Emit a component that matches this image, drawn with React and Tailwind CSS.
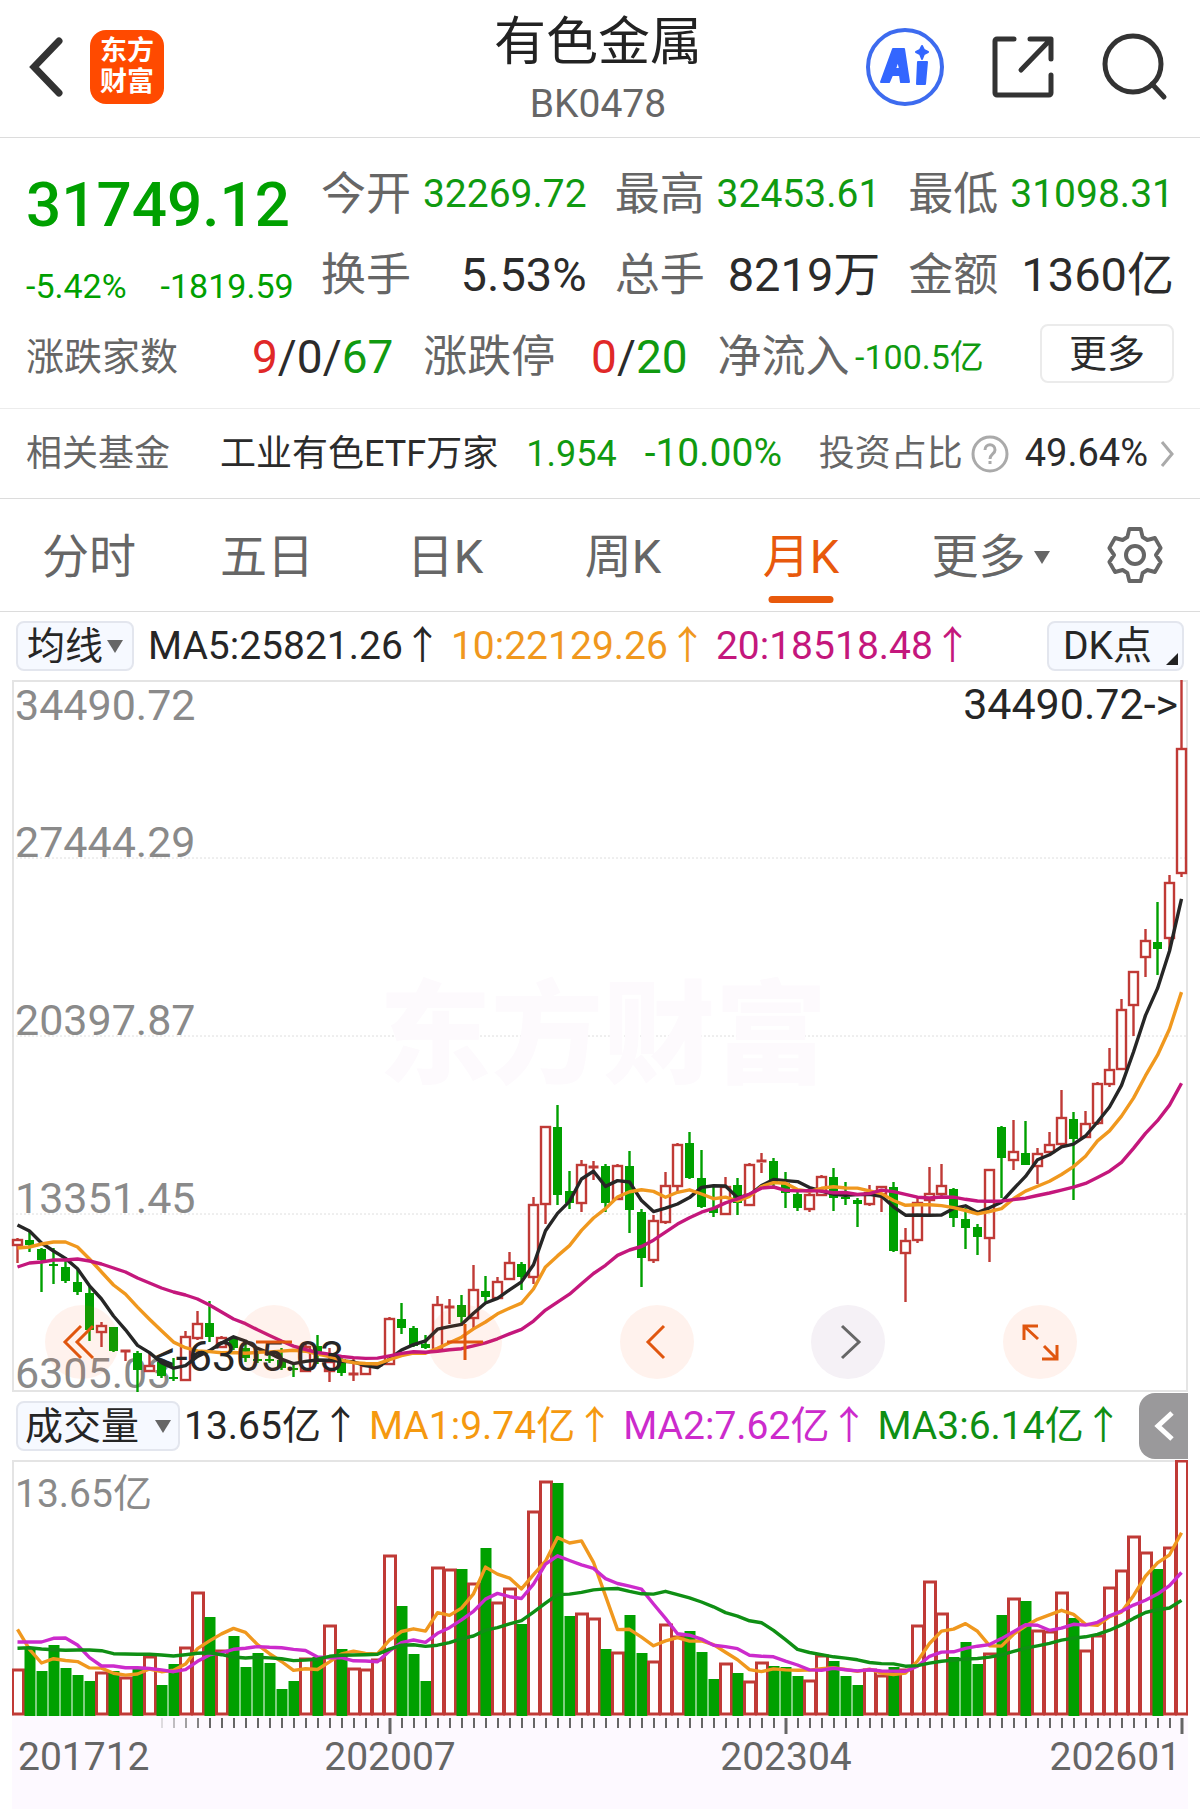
import { useState } from "react";
import clsx from "clsx";

const STEP = 12;
const FIRST_X = 5.5;

// [up / down, high, body top, body bottom, low] in chart units, 0 is the top of the frame
const candles = [
  ["u", 558, 560, 565, 583], ["d", 552, 560, 565, 572], ["d", 568, 569, 580, 612], ["d", 568, 584, 586, 604],
  ["d", 580, 587, 601, 603], ["d", 590, 602, 612, 615], ["d", 607, 613, 650, 661], ["u", 642, 646, 652, 667],
  ["d", 647, 647, 671, 672], ["u", 670, 670, 671, 681], ["d", 671, 673, 690, 712], ["u", 673, 686, 691, 692],
  ["d", 680, 682, 696, 698], ["d", 678, 697, 699, 701], ["u", 651, 657, 700, 701], ["u", 631, 644, 658, 660],
  ["d", 621, 643, 657, 662], ["u", 656, 658, 667, 668], ["d", 656, 658, 668, 670], ["d", 663, 668, 678, 682],
  ["d", 672, 679, 681, 683], ["d", 672, 679, 681, 683], ["d", 668, 680, 688, 690], ["d", 683, 688, 690, 697],
  ["u", 663, 667, 691, 692], ["d", 655, 666, 674, 684], ["u", 668, 682, 691, 702], ["d", 677, 679, 693, 696],
  ["u", 678, 693, 694, 701], ["u", 683, 686, 694, 695], ["u", 683, 684, 687, 688], ["u", 637, 639, 684, 685],
  ["d", 623, 639, 648, 654], ["d", 646, 648, 666, 667], ["d", 655, 664, 668, 669], ["u", 616, 625, 669, 670],
  ["u", 619, 626, 627, 644], ["d", 615, 625, 637, 643], ["u", 585, 610, 638, 648], ["d", 596, 611, 617, 623],
  ["u", 597, 602, 618, 619], ["u", 572, 583, 599, 600], ["d", 582, 584, 597, 610], ["u", 517, 525, 597, 604],
  ["u", 447, 447, 524, 544], ["d", 425, 447, 515, 525], ["d", 491, 511, 523, 529], ["u", 480, 485, 523, 532],
  ["u", 481, 486, 488, 500], ["d", 484, 486, 523, 532], ["u", 484, 486, 519, 519], ["d", 471, 486, 530, 553],
  ["d", 529, 532, 578, 607], ["u", 535, 541, 580, 583], ["u", 492, 506, 542, 544], ["u", 463, 465, 506, 511],
  ["d", 452, 463, 498, 499], ["d", 470, 498, 527, 528], ["d", 507, 528, 533, 537], ["u", 497, 507, 534, 534],
  ["d", 498, 505, 523, 535], ["u", 483, 485, 525, 526], ["u", 473, 480, 483, 493], ["d", 478, 481, 502, 507],
  ["d", 492, 503, 513, 528], ["d", 512, 514, 528, 531], ["u", 513, 515, 529, 532], ["u", 495, 497, 515, 515],
  ["d", 488, 497, 518, 531], ["d", 502, 517, 519, 525], ["d", 518, 520, 524, 547], ["u", 505, 513, 524, 526],
  ["u", 506, 507, 514, 532], ["d", 502, 507, 571, 572], ["u", 548, 561, 573, 622], ["u", 518, 523, 560, 563],
  ["u", 487, 514, 520, 537], ["u", 484, 506, 514, 516], ["d", 508, 509, 538, 547], ["d", 528, 539, 548, 569],
  ["d", 544, 547, 557, 575], ["u", 490, 490, 558, 582], ["d", 446, 447, 478, 518], ["u", 440, 472, 480, 490],
  ["d", 441, 473, 485, 485], ["u", 468, 474, 486, 504], ["u", 452, 465, 472, 473], ["u", 410, 438, 464, 466],
  ["d", 432, 439, 459, 520], ["u", 431, 444, 457, 458], ["u", 402, 404, 443, 445], ["u", 368, 390, 404, 407],
  ["u", 319, 330, 389, 390], ["u", 291, 292, 325, 356], ["u", 249, 261, 277, 297], ["d", 222, 262, 269, 295],
  ["u", 195, 203, 258, 270], ["u", 0, 69, 193, 197],
];

// bar heights, 765 fills the frame
const volumes = [
  137, 197, 132, 209, 142, 121, 102, 130, 132, 114, 137, 177, 90, 154, 205, 370, 293, 195, 236, 145,
  187, 157, 78, 102, 171, 175, 271, 199, 142, 137, 167, 480, 327, 182, 102, 444, 439, 437, 396, 502,
  339, 380, 274, 611, 703, 695, 297, 305, 291, 198, 190, 301, 187, 162, 272, 237, 251, 189, 107, 157,
  125, 103, 159, 147, 143, 118, 106, 179, 163, 117, 89, 139, 120, 143, 137, 270, 403, 305, 173, 220,
  154, 187, 299, 352, 343, 255, 252, 368, 291, 195, 239, 383, 435, 537, 489, 437, 505, 765,
];

// averages that reach back before the first month shown
const priceSeeds = {
  5: [545, 551, 563, 571],
  10: [568, 567, 564, 562, 562, 567, 579, 592, 605],
  20: [587, 583, 582, 580, 580, 579, 581, 584, 588, 592, 598, 603, 608, 612, 615, 619, 625, 632, 639],
};
const volumeSeeds = {
  5: [257, 197, 156, 169],
  10: [219, 219, 219, 230, 231, 210, 172, 147, 147],
  20: [200, 202, 198, 196, 194, 195, 195, 193, 184, 183, 182, 182, 180, 177, 181, 185, 187, 181, 174],
};

const xOf = (i) => FIRST_X + i * STEP;

function movingAverage(values, period, seeds) {
  return values.map((_, i) => {
    if (i < period - 1) return seeds[i];
    const part = values.slice(i - period + 1, i + 1);
    return part.reduce((sum, v) => sum + v, 0) / period;
  });
}

const toPoints = (values) => values.map((v, i) => `${xOf(i)},${v.toFixed(1)}`).join(" ");

const UP = "#c03a36";
const DOWN = "#00a000";

function Caret({ className }) {
  return (
    <svg viewBox="0 0 16 13" className={clsx("w-4 h-[13px] shrink-0", className)} fill="#666">
      <path d="M0 0h16L8 13z" />
    </svg>
  );
}

function Header() {
  return (
    <header className="grid grid-cols-[1fr_auto_1fr] items-center h-[138px] border-b border-[#dcdcdc] pl-7 pr-8 pb-3">
      <div className="flex items-center gap-[25px]">
        <button aria-label="返回">
          <svg viewBox="0 0 37 62" className="w-[37px] h-[62px]" fill="none" stroke="#333" strokeWidth="7" strokeLinecap="round">
            <path d="M31 5 6 31l25 26" />
          </svg>
        </button>
        <a
          href="#home"
          className="w-[74px] h-[74px] rounded-2xl bg-[#ff4a00] text-white font-bold text-[27px] leading-[31px] flex flex-col items-center justify-center"
        >
          <span>东方</span>
          <span>财富</span>
        </a>
      </div>

      <div className="text-center pt-3">
        <h1 className="text-[52px] leading-[62px] text-[#222]">有色金属</h1>
        <p className="text-[39px] leading-[60px] text-[#666]">BK0478</p>
      </div>

      <div className="flex items-center justify-end gap-[45px]">
        <button aria-label="AI">
          <svg viewBox="0 0 80 80" className="w-20 h-20">
            <circle cx="39" cy="40" r="37" fill="none" stroke="#3d6bef" strokeWidth="4" />
            <g fill="#3366ff" stroke="#3366ff" strokeWidth="2" strokeLinejoin="round">
              <path fillRule="evenodd" d="M27 22h11l5 33h-8l-1-7h-8l-3 7h-8zM32 33l-3 9h5z" />
              <path d="M52 35h9l-2 22h-8z" />
              <path d="m56 19 2 4 4 2-4 2-2 5-2-5-4-2 4-2z" />
            </g>
          </svg>
        </button>
        <button aria-label="分享">
          <svg viewBox="0 0 64 64" className="w-16 h-16" fill="none" stroke="#333" strokeWidth="5" strokeLinecap="round" strokeLinejoin="round">
            <path d="M23 4H6a2 2 0 0 0-2 2v52a2 2 0 0 0 2 2h52a2 2 0 0 0 2-2V40" />
            <path d="M39 4h21v20M59 5 30 35" />
          </svg>
        </button>
        <button aria-label="搜索">
          <svg viewBox="0 0 68 68" className="w-[68px] h-[68px]" fill="none" stroke="#333" strokeWidth="5" strokeLinecap="round">
            <circle cx="33" cy="31" r="28" />
            <path d="m52 51 12 13" />
          </svg>
        </button>
      </div>
    </header>
  );
}

const quotes = [
  { label: "今开", value: "32269.72", down: true },
  { label: "最高", value: "32453.61", down: true },
  { label: "最低", value: "31098.31", down: true },
  { label: "换手", value: "5.53%" },
  { label: "总手", value: "8219万" },
  { label: "金额", value: "1360亿" },
];

function Quote() {
  return (
    <section className="px-[26px] pt-4 pb-[10px] border-b border-[#ececec]">
      <div className="flex">
        <div className="w-[295px] shrink-0 text-[#00a000]">
          <p className="pt-[11px] text-[62px] leading-[80px] font-medium">31749.12</p>
          <p className="pt-6 flex gap-[34px] text-[34px] leading-[34px]">
            <span>-5.42%</span>
            <span>-1819.59</span>
          </p>
        </div>
        <dl className="flex-1 grid grid-cols-3 gap-x-7">
          {quotes.map((q) => (
            <div key={q.label} className="flex items-center justify-between h-[81px] whitespace-nowrap">
              <dt className="text-[45px] text-[#666]">{q.label}</dt>
              <dd className={q.down ? "text-[39px] text-[#109a10]" : "text-[47px] text-[#2b2b2b]"}>{q.value}</dd>
            </div>
          ))}
        </dl>
      </div>

      <div className="grid grid-cols-[367fr_264fr_266fr_160fr] gap-[30px] h-[82px] whitespace-nowrap text-[#2b2b2b]">
        <div className="flex items-center justify-between">
          <span className="text-[38px] text-[#666]">涨跌家数</span>
          <span className="text-[46px]">
            <span className="text-[#e02828]">9</span>/0/<span className="text-[#109a10]">67</span>
          </span>
        </div>
        <div className="flex items-center justify-between">
          <span className="text-[44px] text-[#666]">涨跌停</span>
          <span className="text-[46px]">
            <span className="text-[#e02828]">0</span>/<span className="text-[#109a10]">20</span>
          </span>
        </div>
        <div className="flex items-center justify-between">
          <span className="text-[44px] text-[#666]">净流入</span>
          <span className="text-[34px] text-[#109a10]">-100.5亿</span>
        </div>
        <button className="justify-self-end mt-2 w-[134px] h-[59px] rounded-lg border-2 border-[#ebebeb] text-[38px] leading-none">
          更多
        </button>
      </div>
    </section>
  );
}

function FundRow() {
  return (
    <a href="#fund" className="flex items-center gap-7 h-[90px] px-[26px] border-b border-[#dcdcdc] whitespace-nowrap text-[36px] text-[#2b2b2b]">
      <span className="text-[#666] mr-[22px]">相关基金</span>
      <span>工业有色ETF万家</span>
      <span className="text-[#109a10]">1.954</span>
      <span className="text-[39px] text-[#109a10]">-10.00%</span>
      <span className="flex items-center ml-auto">
        <span className="text-[#666]">投资占比</span>
        <svg viewBox="0 0 38 38" className="w-[38px] h-[38px] ml-2" fill="none" stroke="#aaa" strokeWidth="3">
          <circle cx="19" cy="19" r="17" />
          <path d="M14 15c0-7 10-7 10 0 0 4-5 4-5 9M19 26v3" />
        </svg>
        <span className="text-[38px] ml-4">49.64%</span>
        <svg viewBox="0 0 14 26" className="w-[14px] h-[26px] ml-3" fill="none" stroke="#aaa" strokeWidth="3">
          <path d="m2 1 10 12L2 25" />
        </svg>
      </span>
    </a>
  );
}

function Tabs() {
  const [activeTab, setActiveTab] = useState("月K");
  const tabs = ["分时", "五日", "日K", "周K", "月K"];

  return (
    <nav className="grid grid-cols-[repeat(5,178fr)_201fr_109fr] h-[113px] border-b border-[#dcdcdc] text-[47px] text-[#666]">
      {tabs.map((tab) => (
        <button
          key={tab}
          onClick={() => setActiveTab(tab)}
          className={clsx("relative pt-1", activeTab === tab && "text-[#e8590c]")}
        >
          {tab}
          {activeTab === tab && (
            <span className="absolute bottom-2 left-1/2 -translate-x-1/2 w-[65px] h-[7px] rounded-full bg-[#e8590c]" />
          )}
        </button>
      ))}
      <button className="flex items-center justify-center gap-2 pt-1">
        更多
        <Caret />
      </button>
      <button aria-label="设置" className="pl-4">
        <svg viewBox="0 0 56 58" className="w-14 h-[58px]" fill="none" stroke="#666" strokeWidth="4" strokeLinejoin="round">
          <path d="M22 3h12l2 8 5 3 8-2 6 10-5 7 5 7-6 10-8-2-5 3-2 8H22l-2-8-5-3-8 2L1 36l5-7-5-7L7 12l8 2 5-3z" transform="translate(1.4 0) scale(.95 1)" />
          <circle cx="28" cy="29" r="9" />
        </svg>
      </button>
    </nav>
  );
}

function PriceChart() {
  const closes = candles.map(([dir, , top, bottom]) => (dir === "u" ? top : bottom));

  return (
    <svg viewBox="0 0 1176 712" className="block w-full h-auto overflow-visible">
      <rect x="1" y="1" width="1174" height="710" fill="none" stroke="#e4e4e4" strokeWidth="2" />
      {[178, 356, 534].map((y) => (
        <line key={y} x1="0" x2="1176" y1={y} y2={y} stroke="#dedede" strokeDasharray="2 2" />
      ))}
      <text x="591" y="395" textAnchor="middle" fontSize="112" fontWeight="900" fill="#fdfafd">
        东方财富
      </text>

      <g fontSize="43" fill="#8a8a8a">
        <text x="3" y="40">34490.72</text>
        <text x="3" y="177">27444.29</text>
        <text x="3" y="355">20397.87</text>
        <text x="3" y="533">13351.45</text>
        <text x="3" y="708">6305.03</text>
      </g>

      {candles.map(([dir, high, top, bottom, low], i) => {
        const x = xOf(i);
        const height = Math.max(bottom - top, 2);
        return dir === "u" ? (
          <g key={i} stroke={UP} strokeWidth="2.4" fill="none">
            <path d={`M${x} ${high}V${top}M${x} ${bottom}V${low}`} />
            {height < 4 ? (
              <path d={`M${x - 5} ${top + 1}h10`} strokeWidth="3" />
            ) : (
              <rect x={x - 4.5} y={top} width="9" height={height} />
            )}
          </g>
        ) : (
          <g key={i} fill={DOWN}>
            <rect x={x - 1.2} y={high} width="2.4" height={low - high} />
            <rect x={x - 4.5} y={top} width="9" height={height} />
          </g>
        );
      })}

      <g fill="none" strokeWidth="3.4" strokeLinejoin="round">
        <polyline points={toPoints(movingAverage(closes, 5, priceSeeds[5]))} stroke="#262626" />
        <polyline points={toPoints(movingAverage(closes, 10, priceSeeds[10]))} stroke="#f0981e" />
        <polyline points={toPoints(movingAverage(closes, 20, priceSeeds[20]))} stroke="#c4177c" />
      </g>

      <g fontSize="43" fill="#262626">
        <text x="1166" y="39" textAnchor="end">34490.72-&gt;</text>
        <text x="142" y="691">&lt;-6305.03</text>
      </g>
    </svg>
  );
}

const controls = [
  { label: "最早", icon: <path d="M36 21 20 37l16 16M48 21 32 37l16 16" /> },
  { label: "缩小", icon: <path d="M19 37h36" /> },
  { label: "放大", icon: <path d="M19 37h36M37 19v36" /> },
  { label: "向前", icon: <path d="M44 21 28 37l16 16" /> },
  { label: "向后", muted: true, icon: <path d="m31 21 17 16-17 16" /> },
  { label: "全屏", icon: <path d="M21 35V21h14M22 22l13 12M54 40v14H39M53 53 41 41" /> },
];

function ChartControls() {
  return (
    <div className="absolute bottom-[13px] left-[33px] right-[111px] flex justify-between">
      {controls.map((c) => (
        <button
          key={c.label}
          aria-label={c.label}
          className={clsx("w-[74px] h-[74px] rounded-full", c.muted ? "bg-[#f5f1f6]" : "bg-[#ff5a1e]/8")}
        >
          <svg viewBox="0 0 74 74" fill="none" stroke={c.muted ? "#666" : "#e0560f"} strokeWidth="3">
            {c.icon}
          </svg>
        </button>
      ))}
    </div>
  );
}

function VolumeChart() {
  return (
    <svg viewBox="0 0 1176 256" className="block w-full h-auto">
      <path d="M1 256V1h1174v255" fill="none" stroke="#e4e4e4" strokeWidth="2" />
      <text x="3" y="47" fontSize="39" fill="#8a8a8a">13.65亿</text>
      {volumes.map((v, i) => {
        const h = Math.round(v / 3);
        return candles[i][0] === "u" ? (
          <rect key={i} x={xOf(i) - 5} y={256 - h} width="11" height={h - 2} fill="#fff" stroke={UP} strokeWidth="3" />
        ) : (
          <rect key={i} x={xOf(i) - 5} y={255 - h} width="11" height={h + 1} fill={DOWN} />
        );
      })}
      <g fill="none" strokeWidth="3.4" strokeLinejoin="round">
        {[[5, "#f0981e"], [10, "#cc2bcc"], [20, "#0f8f14"]].map(([period, color]) => (
          <polyline
            key={period}
            points={toPoints(movingAverage(volumes, period, volumeSeeds[period]).map((v) => 255 - v / 3))}
            stroke={color}
          />
        ))}
      </g>
    </svg>
  );
}

function TimeAxis() {
  const ticks = volumes.map((_, i) => i).filter((i) => i > 11);

  return (
    <svg viewBox="0 0 1176 93" className="block w-full h-auto bg-[#fdf9ff]">
      {ticks.map((i) => {
        const major = i === 31 || i === 64 || i === 97;
        return (
          <line
            key={i}
            x1={xOf(i) + 0.5}
            x2={xOf(i) + 0.5}
            y1="2"
            y2={major ? 18 : 12}
            stroke="#666"
            strokeWidth={major ? 3 : 2}
            opacity={Math.min(1, (i - 11) / 5)}
          />
        );
      })}
      <g fontSize="39" fill="#666">
        <text x="6" y="54">201712</text>
        <text x="378" y="54" textAnchor="middle">202007</text>
        <text x="774" y="54" textAnchor="middle">202304</text>
        <text x="1169" y="54" textAnchor="end">202601</text>
      </g>
    </svg>
  );
}

export default function App() {
  return (
    <div className="min-h-screen bg-white font-[Roboto,'Noto_Sans_CJK_SC',sans-serif]">
      <Header />
      <Quote />
      <FundRow />
      <Tabs />

      <main className="px-3">
        <div className="flex items-center h-[68px] pl-1 pr-1 whitespace-nowrap text-[39px] text-[#262626]">
          <button className="flex items-center justify-center gap-1 w-[118px] h-[50px] rounded-lg border-2 border-[#e3e6ee] bg-[#f6f9ff] text-[38px]">
            均线
            <Caret />
          </button>
          <div className="flex gap-[9px] ml-[14px]">
            <span>MA5:25821.26↑</span>
            <span className="text-[#f0981e]">10:22129.26↑</span>
            <span className="text-[#c4177c]">20:18518.48↑</span>
          </div>
          <button className="relative ml-auto w-[137px] h-[50px] pr-4 rounded-lg border-2 border-[#e3e6ee] bg-[#f6f9ff] leading-none">
            DK点
            <svg viewBox="0 0 12 12" className="absolute right-1 bottom-1 w-3 h-3" fill="#222">
              <path d="M12 0v12H0z" />
            </svg>
          </button>
        </div>

        <div className="relative">
          <PriceChart />
          <ChartControls />
        </div>

        <div className="flex items-center h-[68px] pl-1 whitespace-nowrap text-[39px] text-[#262626]">
          <button className="flex items-center justify-center gap-4 w-[164px] h-[50px] rounded-lg border-2 border-[#e3e6ee] bg-[#f6f9ff] text-[38px]">
            成交量
            <Caret />
          </button>
          <div className="flex gap-[9px] ml-1">
            <span>13.65亿↑</span>
            <span className="text-[#f5990f]">MA1:9.74亿↑</span>
            <span className="text-[#cc2bcc]">MA2:7.62亿↑</span>
            <span className="text-[#0f8f14]">MA3:6.14亿↑</span>
          </div>
          <button aria-label="展开" className="ml-auto w-[49px] h-[66px] rounded-l-2xl bg-[#9a999b]">
            <svg viewBox="0 0 49 66" fill="none" stroke="#fff" strokeWidth="5">
              <path d="M33 20 19 33l14 13" />
            </svg>
          </button>
        </div>

        <VolumeChart />
        <TimeAxis />
      </main>
    </div>
  );
}
